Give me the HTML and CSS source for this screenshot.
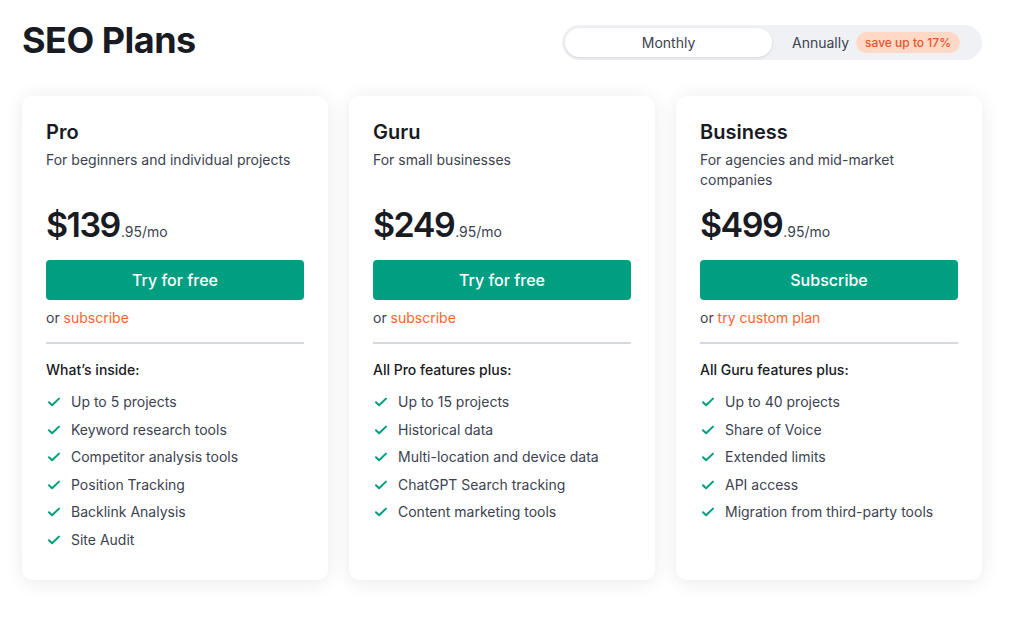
FILE: index.html
```html
<!DOCTYPE html>
<html>
<head>
<meta charset="utf-8">
<title>SEO Plans</title>
<link rel="stylesheet" href="styles.css">
</head>
<body>
<div class="page">
  <div class="header">
    <h1>SEO Plans</h1>
    <div class="toggle">
      <span class="opt opt-current">Monthly</span>
      <span class="opt">Annually <span class="save">save up to 17%</span></span>
    </div>
  </div>

  <div class="plans">
    <div class="plan">
      <h2>Pro</h2>
      <p class="desc">For beginners and individual projects</p>
      <div class="price"><span class="amount">$139</span><span class="cents">.95/mo</span></div>
      <a class="btn" href="#">Try for free</a>
      <p class="alt">or <a href="#">subscribe</a></p>
      <hr>
      <p class="inside">What’s inside:</p>
      <ul class="features">
        <li><svg viewBox="0 0 14 14"><path d="M2 7.3l3.1 3L12 3.6"/></svg>Up to 5 projects</li>
        <li><svg viewBox="0 0 14 14"><path d="M2 7.3l3.1 3L12 3.6"/></svg>Keyword research tools</li>
        <li><svg viewBox="0 0 14 14"><path d="M2 7.3l3.1 3L12 3.6"/></svg>Competitor analysis tools</li>
        <li><svg viewBox="0 0 14 14"><path d="M2 7.3l3.1 3L12 3.6"/></svg>Position Tracking</li>
        <li><svg viewBox="0 0 14 14"><path d="M2 7.3l3.1 3L12 3.6"/></svg>Backlink Analysis</li>
        <li><svg viewBox="0 0 14 14"><path d="M2 7.3l3.1 3L12 3.6"/></svg>Site Audit</li>
      </ul>
    </div>

    <div class="plan">
      <h2>Guru</h2>
      <p class="desc">For small businesses</p>
      <div class="price"><span class="amount">$249</span><span class="cents">.95/mo</span></div>
      <a class="btn" href="#">Try for free</a>
      <p class="alt">or <a href="#">subscribe</a></p>
      <hr>
      <p class="inside">All Pro features plus:</p>
      <ul class="features">
        <li><svg viewBox="0 0 14 14"><path d="M2 7.3l3.1 3L12 3.6"/></svg>Up to 15 projects</li>
        <li><svg viewBox="0 0 14 14"><path d="M2 7.3l3.1 3L12 3.6"/></svg>Historical data</li>
        <li><svg viewBox="0 0 14 14"><path d="M2 7.3l3.1 3L12 3.6"/></svg>Multi-location and device data</li>
        <li><svg viewBox="0 0 14 14"><path d="M2 7.3l3.1 3L12 3.6"/></svg>ChatGPT Search tracking</li>
        <li><svg viewBox="0 0 14 14"><path d="M2 7.3l3.1 3L12 3.6"/></svg>Content marketing tools</li>
      </ul>
    </div>

    <div class="plan">
      <h2>Business</h2>
      <p class="desc">For agencies and mid-market companies</p>
      <div class="price"><span class="amount">$499</span><span class="cents">.95/mo</span></div>
      <a class="btn" href="#">Subscribe</a>
      <p class="alt">or <a href="#">try custom plan</a></p>
      <hr>
      <p class="inside">All Guru features plus:</p>
      <ul class="features">
        <li><svg viewBox="0 0 14 14"><path d="M2 7.3l3.1 3L12 3.6"/></svg>Up to 40 projects</li>
        <li><svg viewBox="0 0 14 14"><path d="M2 7.3l3.1 3L12 3.6"/></svg>Share of Voice</li>
        <li><svg viewBox="0 0 14 14"><path d="M2 7.3l3.1 3L12 3.6"/></svg>Extended limits</li>
        <li><svg viewBox="0 0 14 14"><path d="M2 7.3l3.1 3L12 3.6"/></svg>API access</li>
        <li><svg viewBox="0 0 14 14"><path d="M2 7.3l3.1 3L12 3.6"/></svg>Migration from third-party tools</li>
      </ul>
    </div>
  </div>
</div>
</body>
</html>
```

FILE: styles.css
```css
html, body { margin: 0; padding: 0; background: #fff; }
body { font-family: Inter, "Noto Sans", Arial, sans-serif; color: #191b23; font-size: 14px; }

.page { width: 960px; padding: 0 22px 40px 22px; }

.header {
  display: flex; justify-content: space-between; align-items: center;
  height: 84px;
}
h1 {
  margin: 0; font-size: 36px; font-weight: 700; letter-spacing: -0.5px;
  line-height: 44px; margin-top: -4px;
}

.toggle {
  display: flex; align-items: center;
  width: 420px; height: 35px; box-sizing: border-box;
  padding: 3px; background: #f0f1f5; border-radius: 18px;
}
.opt {
  display: flex; align-items: center; height: 29px;
  color: #3c4250; font-size: 14px; padding-left: 20px;
}
.opt-current {
  width: 207px; justify-content: center; padding: 0;
  background: #fff; border-radius: 15px;
  box-shadow: 0 1px 3px rgba(25, 27, 35, 0.12);
}
.save {
  margin-left: 7px; padding: 0 9px; height: 21px; line-height: 21px;
  background: #ffd8c6; color: #e5562c; font-size: 12px; font-weight: 500;
  border-radius: 11px;
}

.plans { display: flex; gap: 21px; margin-top: 12px; }
.plan {
  width: 306px; height: 484px; box-sizing: border-box;
  padding: 23px 24px 0 24px;
  background: #fff; border-radius: 10px;
  box-shadow: 0 2px 18px rgba(40, 50, 80, 0.10);
}
h2 { margin: 0; font-size: 20px; font-weight: 600; line-height: 26px; }
.desc {
  margin: 5px 0 0; min-height: 40px; line-height: 20px;
  color: #3c4250; font-size: 14px; width: 220px;
}
.plan:first-child .desc, .plan:nth-child(2) .desc { width: auto; }
.price { margin-top: 15px; line-height: 40px; }
.amount { font-size: 34px; font-weight: 600; letter-spacing: -1.5px; }
.cents { font-size: 14px; color: #3c4250; margin-left: 1px; }

.btn {
  display: block; margin-top: 8px; height: 40px; line-height: 40px;
  background: #009f81; color: #fff; text-decoration: none; text-align: center;
  font-size: 16px; font-weight: 500; border-radius: 4px;
}
.alt { margin: 8px 0 0; line-height: 20px; color: #3c4250; }
.alt a { color: #ff642d; text-decoration: none; }

hr { margin: 14px 0 0; border: none; border-top: 2px solid #d5d8e0; }

.inside { margin: 16px 0 0; line-height: 20px; font-weight: 500; }

.features {
  list-style: none; margin: 12px 0 0; padding: 0;
  display: flex; flex-direction: column; gap: 7.6px;
}
.features li { display: flex; align-items: center; line-height: 20px; color: #3c4250; }
.features svg {
  width: 14px; height: 14px; margin: 0 10px 0 1px; flex: none;
  fill: none; stroke: #009f81; stroke-width: 2; stroke-linecap: round; stroke-linejoin: round;
}
```
